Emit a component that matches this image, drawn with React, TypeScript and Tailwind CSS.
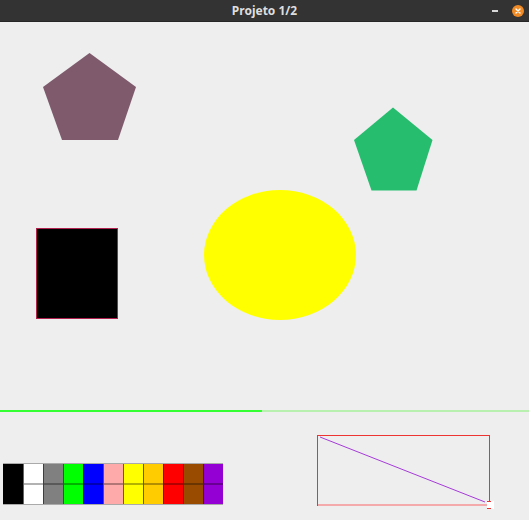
import React from "react";

const swatches = [
  "#000000",
  "#ffffff",
  "#808080",
  "#00ff00",
  "#0000ff",
  "#ffaaaa",
  "#ffff00",
  "#ffcc00",
  "#ff0000",
  "#994c00",
  "#9400d3",
];

function TitleBar() {
  return (
    <div className="relative flex h-[22px] shrink-0 items-center justify-center bg-[#333333] border-b border-[#262626]">
      <span
        className="text-[12px] font-bold text-[#dedede] leading-none"
        style={{ fontFamily: '"Noto Sans", "DejaVu Sans", sans-serif' }}
      >
        Projeto 1/2
      </span>
      <div className="absolute right-[5px] top-0 flex h-[21px] items-center gap-[14px]">
        <div className="h-[2px] w-[6px] bg-[#d8d8d8]" />
        <div className="flex h-[12px] w-[12px] items-center justify-center rounded-full bg-[#f08a24]">
          <svg width="6" height="6" viewBox="0 0 6 6">
            <path d="M1 1 L5 5 M5 1 L1 5" stroke="#ffffff" strokeWidth="1.4" strokeLinecap="round" />
          </svg>
        </div>
      </div>
    </div>
  );
}

function Canvas() {
  return (
    <div className="h-[388px] w-full shrink-0 bg-[#eeeeee]">
      <svg width="529" height="388" viewBox="0 22 529 388" className="block">
        <polygon points="89.5,53 136,87 118,140 62,140 43,87" fill="#7e5a6c" />
        <polygon points="393,107.5 432.5,140 416.5,190.5 371.5,190.5 354,140" fill="#27bd6e" />
        <ellipse cx="280" cy="255" rx="76" ry="65" fill="#ffff00" />
        <rect x="36.5" y="228.5" width="81" height="90" fill="#000000" stroke="#b0204e" strokeWidth="1" />
      </svg>
    </div>
  );
}

function Palette() {
  return (
    <div className="ml-[3px] flex flex-col">
      <div className="h-[1px] w-[220px] bg-[#aaaaaa]" />
      <div className="flex">
        {swatches.map((c, i) => (
          <div
            key={c}
            className={`relative h-[40px] w-[20px] ${i > 0 ? "border-l border-[#222222]/70" : ""}`}
            style={{ backgroundColor: c }}
          >
            <div className="absolute left-0 right-0 top-[19px] h-[2px] bg-black/30" />
          </div>
        ))}
      </div>
      <div className="h-[1px] w-[220px] bg-[#aaaaaa]" />
    </div>
  );
}

function Preview() {
  return (
    <div className="relative flex h-[71px] w-[173px]">
      <div className="w-[1px] bg-[#ee3333]" />
      <div className="flex flex-1 flex-col">
        <div className="h-[1px] bg-[#ee3333]" />
        <div className="flex-1" />
        <div className="h-[2px] bg-[#f4aaaa]" />
      </div>
      <div className="mb-[2px] w-[1px] bg-[#ee3333]" />
      <svg width="173" height="72" className="absolute left-0 top-0">
        <line x1="3" y1="2" x2="168" y2="67" stroke="#a63ad8" strokeWidth="1" />
      </svg>
      <div className="absolute right-[-4px] bottom-[-3px] h-[8px] w-[7px] bg-white">
        <div className="absolute left-0 top-0 h-[1px] w-[4px] bg-[#ee3333]" />
        <div className="absolute left-0 bottom-0 h-[1px] w-[4px] bg-[#ee3333]" />
      </div>
    </div>
  );
}

export default function App() {
  return (
    <div className="flex h-[520px] w-[529px] flex-col overflow-hidden bg-[#eeeeee]">
      <TitleBar />
      <Canvas />
      <div className="flex h-[2px] w-full shrink-0">
        <div className="w-[262px] bg-[#33ff33]" />
        <div className="flex-1 bg-[#b8f0b0]" />
      </div>
      <div className="flex flex-1 items-start">
        <div className="pt-[51px]">
          <Palette />
        </div>
        <div className="ml-[94px] pt-[23px]">
          <Preview />
        </div>
      </div>
    </div>
  );
}
